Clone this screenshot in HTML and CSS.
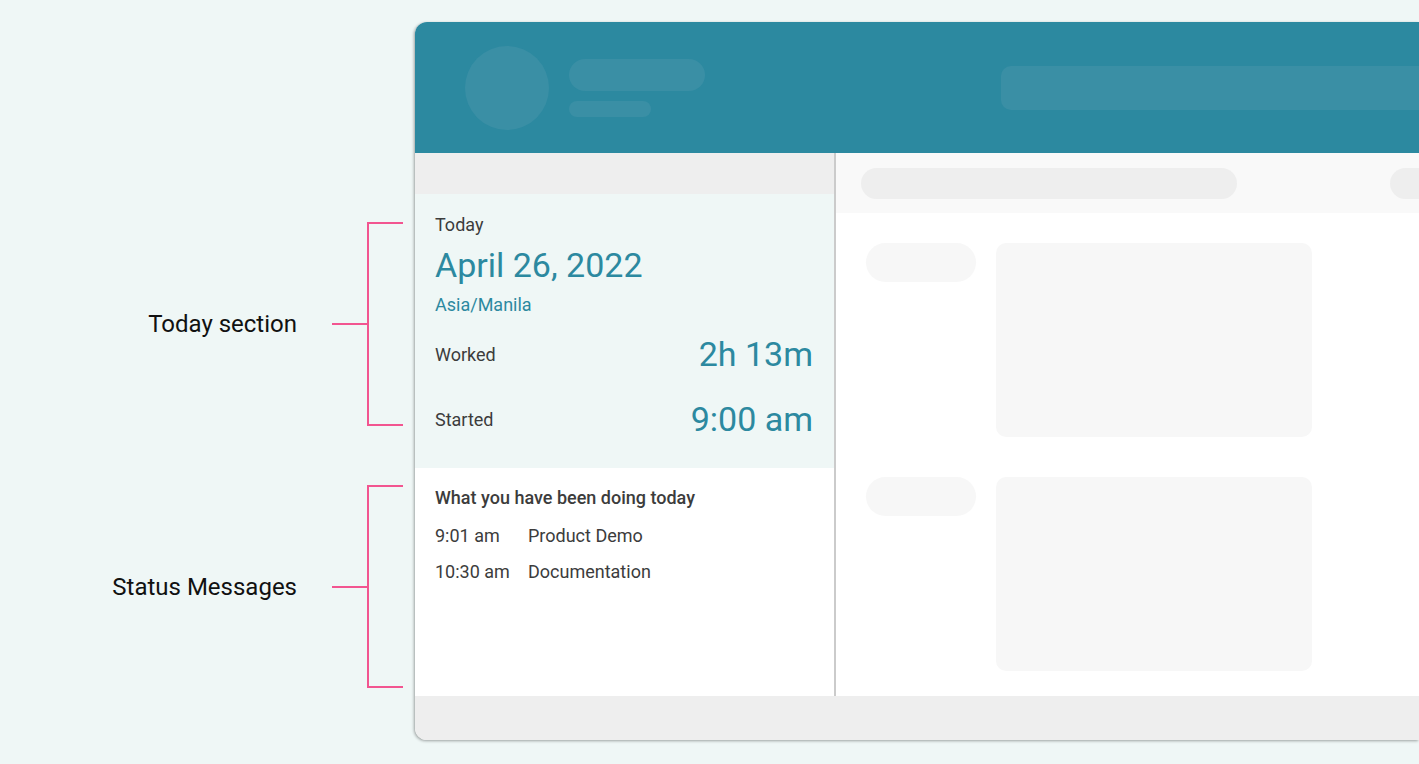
FILE: index.html
```html
<!DOCTYPE html>
<html lang="en">
<head>
    <meta charset="UTF-8">
    <meta name="viewport" content="width=device-width, initial-scale=1.0">
    <title>Today Overview</title>
    <link rel="stylesheet" href="styles.css">
</head>
<body>
    <div class="annotations">
        <div class="callout callout-today">
            <span class="callout-label">Today section</span>
            <span class="callout-line"></span>
            <span class="callout-bracket"></span>
        </div>
        <div class="callout callout-status">
            <span class="callout-label">Status Messages</span>
            <span class="callout-line"></span>
            <span class="callout-bracket"></span>
        </div>
    </div>

    <div class="window">
        <div class="header">
            <div class="avatar"></div>
            <div class="brand">
                <div class="brand-title"></div>
                <div class="brand-sub"></div>
            </div>
            <div class="search"></div>
        </div>

        <div class="body">
            <div class="sidebar">
                <div class="sidebar-top"></div>
                <div class="today">
                    <div class="today-label">Today</div>
                    <div class="today-date">April 26, 2022</div>
                    <div class="today-zone">Asia/Manila</div>
                    <div class="stat">
                        <span class="stat-label">Worked</span>
                        <span class="stat-value">2h 13m</span>
                    </div>
                    <div class="stat">
                        <span class="stat-label">Started</span>
                        <span class="stat-value">9:00 am</span>
                    </div>
                </div>
                <div class="status">
                    <h4>What you have been doing today</h4>
                    <div class="status-row">
                        <span class="status-time">9:01 am</span>
                        <span>Product Demo</span>
                    </div>
                    <div class="status-row">
                        <span class="status-time">10:30 am</span>
                        <span>Documentation</span>
                    </div>
                </div>
            </div>

            <div class="main">
                <div class="toolbar">
                    <div class="toolbar-pill"></div>
                    <div class="toolbar-pill small"></div>
                </div>
                <div class="content">
                    <div class="entry">
                        <div class="entry-pill"></div>
                        <div class="entry-card"></div>
                    </div>
                    <div class="entry">
                        <div class="entry-pill"></div>
                        <div class="entry-card"></div>
                    </div>
                </div>
            </div>
        </div>

        <div class="footer"></div>
    </div>
</body>
</html>
```

FILE: styles.css
```css
body {
    font-family: 'Roboto', sans-serif;
    background: #eff7f6;
    margin: 0;
    display: flex;
    height: 100vh;
    overflow: hidden;
    color: #3c3c3c;
}
.annotations {
    width: 415px;
    flex-shrink: 0;
    padding-top: 222px;
    display: flex;
    flex-direction: column;
}
.callout {
    display: flex;
    align-items: center;
    justify-content: flex-end;
    padding-right: 12px;
}
.callout-today {
    height: 204px;
}
.callout-status {
    height: 203px;
    margin-top: 59px;
}
.callout-label {
    font-size: 24px;
    color: #111111;
    margin-right: 35px;
}
.callout-line {
    width: 35px;
    height: 2px;
    background: #f25590;
}
.callout-bracket {
    width: 34px;
    align-self: stretch;
    border: 2px solid #f25590;
    border-right: none;
}
.window {
    margin-top: 22px;
    flex: 1;
    min-width: 0;
    height: 718px;
    display: flex;
    flex-direction: column;
    border-radius: 12px 0 0 12px;
    overflow: hidden;
    background: #ffffff;
    box-shadow: -1px 1px 3px rgba(0, 0, 0, 0.35);
}
.header {
    height: 131px;
    flex-shrink: 0;
    background: #2c89a0;
    display: flex;
    align-items: center;
    padding-left: 50px;
}
.avatar {
    width: 84px;
    height: 84px;
    border-radius: 50%;
    background: #3a8fa5;
}
.brand {
    margin-left: 20px;
    display: flex;
    flex-direction: column;
    gap: 10px;
}
.brand-title {
    width: 136px;
    height: 32px;
    border-radius: 16px;
    background: #3a8fa5;
}
.brand-sub {
    width: 82px;
    height: 16px;
    border-radius: 8px;
    background: #3a8fa5;
}
.search {
    margin-left: 296px;
    flex: 1;
    height: 44px;
    border-radius: 10px 0 0 10px;
    background: #3a8fa5;
}
.body {
    flex: 1;
    display: flex;
}
.sidebar {
    width: 419px;
    flex-shrink: 0;
    border-right: 2px solid #cbcbcb;
    display: flex;
    flex-direction: column;
}
.sidebar-top {
    height: 41px;
    background: #eeeeee;
}
.today {
    height: 274px;
    box-sizing: border-box;
    background: #eff7f6;
    padding: 21px 21px 0 20px;
}
.today-label {
    font-size: 18px;
    line-height: 20px;
}
.today-date {
    font-size: 34px;
    line-height: 40px;
    margin-top: 10px;
    color: #2c89a0;
}
.today-zone {
    font-size: 18px;
    line-height: 20px;
    margin-top: 10px;
    color: #2c89a0;
}
.stat {
    height: 50px;
    display: flex;
    align-items: center;
    justify-content: space-between;
    margin-top: 14px;
}
.stat + .stat {
    margin-top: 15px;
}
.stat-label {
    font-size: 18px;
}
.stat-value {
    font-size: 34px;
    color: #2c89a0;
}
.status {
    flex: 1;
    padding: 20px 20px 0 20px;
    background: #ffffff;
}
.status h4 {
    margin: 0 0 18px 0;
    font-size: 18px;
    line-height: 20px;
    font-weight: 500;
}
.status-row {
    display: flex;
    font-size: 18px;
    line-height: 20px;
    margin-bottom: 16px;
}
.status-time {
    width: 93px;
}
.main {
    flex: 1;
    min-width: 0;
    display: flex;
    flex-direction: column;
}
.toolbar {
    height: 60px;
    background: #f9f9f9;
    display: flex;
    align-items: center;
    padding-left: 25px;
}
.toolbar-pill {
    width: 376px;
    height: 31px;
    border-radius: 16px;
    background: #eeeeee;
}
.toolbar-pill.small {
    flex: 1;
    margin-left: 153px;
    border-radius: 16px 0 0 16px;
}
.content {
    padding: 30px 0 0 30px;
    display: flex;
    flex-direction: column;
    gap: 40px;
}
.entry {
    display: flex;
    gap: 20px;
    align-items: flex-start;
}
.entry-pill {
    width: 110px;
    height: 39px;
    border-radius: 20px;
    background: #f7f7f7;
}
.entry-card {
    width: 316px;
    height: 194px;
    border-radius: 10px;
    background: #f7f7f7;
}
.footer {
    height: 44px;
    flex-shrink: 0;
    background: #eeeeee;
}
```
